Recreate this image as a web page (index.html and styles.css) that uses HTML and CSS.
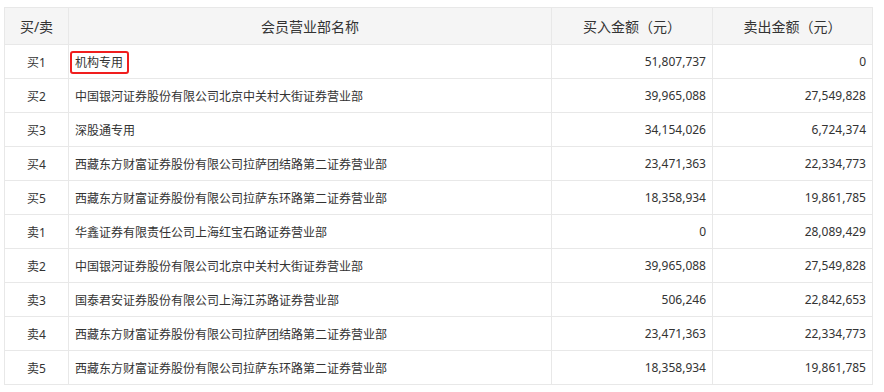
FILE: index.html
```html
<!DOCTYPE html>
<html lang="zh-CN">
<head>
<meta charset="utf-8">
<title>龙虎榜营业部</title>
<link rel="stylesheet" href="styles.css">
</head>
<body>
<table class="seats">
  <colgroup>
    <col class="c-side">
    <col class="c-name">
    <col class="c-buy">
    <col class="c-sell">
  </colgroup>
  <thead>
    <tr>
      <th>买/卖</th>
      <th>会员营业部名称</th>
      <th>买入金额（元）</th>
      <th>卖出金额（元）</th>
    </tr>
  </thead>
  <tbody>
    <tr><td class="side">买1</td><td class="name"><span class="mark">机构专用</span></td><td class="num">51,807,737</td><td class="num">0</td></tr>
    <tr><td class="side">买2</td><td class="name">中国银河证券股份有限公司北京中关村大街证券营业部</td><td class="num">39,965,088</td><td class="num">27,549,828</td></tr>
    <tr><td class="side">买3</td><td class="name">深股通专用</td><td class="num">34,154,026</td><td class="num">6,724,374</td></tr>
    <tr><td class="side">买4</td><td class="name">西藏东方财富证券股份有限公司拉萨团结路第二证券营业部</td><td class="num">23,471,363</td><td class="num">22,334,773</td></tr>
    <tr><td class="side">买5</td><td class="name">西藏东方财富证券股份有限公司拉萨东环路第二证券营业部</td><td class="num">18,358,934</td><td class="num">19,861,785</td></tr>
    <tr><td class="side">卖1</td><td class="name">华鑫证券有限责任公司上海红宝石路证券营业部</td><td class="num">0</td><td class="num">28,089,429</td></tr>
    <tr><td class="side">卖2</td><td class="name">中国银河证券股份有限公司北京中关村大街证券营业部</td><td class="num">39,965,088</td><td class="num">27,549,828</td></tr>
    <tr><td class="side">卖3</td><td class="name">国泰君安证券股份有限公司上海江苏路证券营业部</td><td class="num">506,246</td><td class="num">22,842,653</td></tr>
    <tr><td class="side">卖4</td><td class="name">西藏东方财富证券股份有限公司拉萨团结路第二证券营业部</td><td class="num">23,471,363</td><td class="num">22,334,773</td></tr>
    <tr><td class="side">卖5</td><td class="name">西藏东方财富证券股份有限公司拉萨东环路第二证券营业部</td><td class="num">18,358,934</td><td class="num">19,861,785</td></tr>
  </tbody>
</table>
</body>
</html>
```

FILE: styles.css
```css
html, body {
  margin: 0;
  padding: 0;
  background: #ffffff;
}

body {
  padding: 7px 0 0 4px;
  font-family: "Noto Sans", "Noto Sans CJK SC", sans-serif;
  color: #333333;
}

.seats {
  border-collapse: collapse;
  table-layout: fixed;
  width: 869px;
  border: 1px solid #e8e8e8;
}

.c-side { width: 64px; }
.c-name { width: 483px; }
.c-buy { width: 161px; }
.c-sell { width: 160px; }

.seats th,
.seats td {
  border: 1px solid #e8e8e8;
  padding: 0 6px;
  white-space: nowrap;
}

.seats th {
  height: 36px;
  background: #f5f5f5;
  font-weight: normal;
  font-size: 14px;
  text-align: center;
}

.seats td {
  height: 33px;
  font-size: 12px;
}

.seats td.side {
  text-align: center;
}

.seats td.name {
  text-align: left;
}

.seats td.num {
  text-align: right;
}

.mark {
  position: relative;
}

.mark::after {
  content: "";
  position: absolute;
  left: -5px;
  right: -6px;
  top: -3px;
  bottom: -3px;
  border: 2px solid #f01e1e;
  border-radius: 3px;
}
```
